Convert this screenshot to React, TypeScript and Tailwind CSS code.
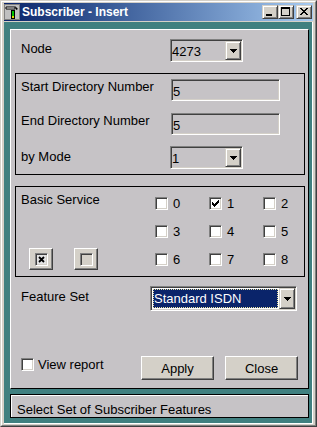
import React from "react";

// classic bevels
const sunken =
  "border border-t-[#808080] border-l-[#808080] border-b-white border-r-white shadow-[inset_1px_1px_0_#404040,inset_-1px_-1px_0_#d4d0c8]";
const raised =
  "border border-t-white border-l-white border-b-[#404040] border-r-[#404040] shadow-[inset_-1px_-1px_0_#808080] bg-[#d4d0c8]";
const capBtn =
  "w-[16px] h-[14px] box-border bg-[#d4d0c8] border border-t-[#d4d0c8] border-l-[#d4d0c8] border-b-[#404040] border-r-[#404040] shadow-[inset_1px_1px_0_#fff,inset_-1px_-1px_0_#808080]";

const ArrowBtn = () => (
  <div className="w-[16px] h-full box-border flex items-center justify-center pt-[1px] bg-[#d4d0c8] border border-t-[#d4d0c8] border-l-[#d4d0c8] border-b-[#404040] border-r-[#404040] shadow-[inset_1px_1px_0_#fff,inset_-1px_-1px_0_#808080]">
    <svg width="7" height="4" viewBox="0 0 7 4">
      <path d="M0 0h7v1H0zM1 1h5v1H1zM2 2h3v1H2zM3 3h1v1H3z" fill="#000" />
    </svg>
  </div>
);

const Combo = ({ value }: { value: string }) => (
  <div className={`w-[73px] h-[23px] box-border p-[1px] flex ${sunken}`}>
    <div className="flex-1 pt-[3px] leading-[15px]">{value}</div>
    <ArrowBtn />
  </div>
);

const Field = ({ value }: { value: string }) => (
  <div className={`w-[109px] h-[22px] box-border px-[1px] pt-[4px] leading-[15px] ${sunken}`}>{value}</div>
);

const Check = ({ on }: { on?: boolean }) => (
  <div className={`w-[13px] h-[13px] box-border bg-white flex items-center justify-center ${sunken}`}>
    {on && (
      <svg width="7" height="7" viewBox="0 0 7 7">
        <path
          d="M6 0h1v1H6zM5 1h2v1H5zM0 2h1v1H0zM4 2h3v1H4zM0 3h2v1H0zM3 3h3v1H3zM0 4h5v1H0zM1 5h3v1H1zM2 6h1v1H2z"
          fill="#000"
        />
      </svg>
    )}
  </div>
);

const TitleIcon = () => (
  <svg width="16" height="16" viewBox="0 0 16 16">
    <rect x="0" y="0" width="16" height="16" fill="#c0c0c0" />
    <rect x="0.5" y="0.5" width="15" height="15" fill="none" stroke="#808080" />
    <path d="M2 3h9v2H2z" fill="#fff" stroke="#000" strokeWidth="1" />
    <path d="M11 2l3 3-2 1z" fill="#000" />
    <rect x="7" y="6" width="4" height="9" fill="#000" />
    <rect x="8" y="7" width="2" height="5" fill="#00c000" />
    <rect x="8" y="12" width="2" height="2" fill="#e0e000" />
  </svg>
);

export default function App() {
  const services = ["0", "1", "2", "3", "4", "5", "6", "7", "8"];

  return (
    <div className="w-[317px] h-[427px] box-border border border-t-[#d4d0c8] border-l-[#d4d0c8] border-b-[#404040] border-r-[#404040] bg-[#d4d0c8] font-['Liberation_Sans',Arial,sans-serif] text-[13px] text-black">
      <div className="h-full box-border border border-t-white border-l-white border-b-[#808080] border-r-[#808080] pt-[1px] pl-[2px] pr-[2px] pb-[1px] flex flex-col">
        {/* Title bar */}
        <div className="h-[18px] mb-[1px] flex items-center pr-[1px] bg-linear-to-r from-[#0a246a] to-[#a6caf0]">
          <TitleIcon />
          <span className="ml-[2px] mt-[-1px] text-white font-bold text-[12px] leading-[14px]">Subscriber - Insert</span>
          <div className="ml-auto flex">
            <div className={capBtn}>
              <svg width="14" height="12" viewBox="0 0 14 12">
                <rect x="3" y="8" width="6" height="2" fill="#000" />
              </svg>
            </div>
            <div className={capBtn}>
              <svg width="14" height="12" viewBox="0 0 14 12">
                <path d="M2 1h9v2H2zM2 1h1v9H2zM10 1h1v9h-1zM2 9h9v1H2z" fill="#000" />
              </svg>
            </div>
            <div className={`${capBtn} ml-[2px]`}>
              <svg width="14" height="12" viewBox="0 0 14 12">
                <path
                  d="M3 2h2v1H3zM9 2h2v1H9zM4 3h2v1H4zM8 3h2v1H8zM5 4h4v1H5zM6 5h2v1H6zM5 6h4v1H5zM4 7h2v1H4zM8 7h2v1H8zM3 8h2v1H3zM9 8h2v1H9z"
                  fill="#000"
                />
              </svg>
            </div>
          </div>
        </div>

        {/* Client area */}
        <div className="flex-1 flex flex-col box-border bg-[#408080] border-r border-b border-white pt-[7px] pb-[5px] pl-[6px] pr-[3px]">
          <div className="flex-1 flex flex-col box-border border border-t-white border-l-white border-b-black border-r-black bg-[#c6c3c6] pb-[8px]">
            {/* Node */}
            <div className="mt-[9px] pl-[10px] flex items-start">
              <div className="w-[149px] pt-[2px] leading-[15px]">Node</div>
              <Combo value="4273" />
            </div>

            {/* Directory numbers */}
            <div className="mt-[11px] ml-[4px] mr-[3px] border border-black pt-[5px] pb-[5px] pl-[5px] flex flex-col">
              <div className="flex items-start">
                <div className="w-[150px] leading-[15px]">Start Directory Number</div>
                <Field value="5" />
              </div>
              <div className="mt-[12px] flex items-start">
                <div className="w-[150px] leading-[15px]">End Directory Number</div>
                <Field value="5" />
              </div>
              <div className="mt-[11px] flex items-start">
                <div className="w-[149px] pt-[3px] leading-[15px]">by Mode</div>
                <Combo value="1" />
              </div>
            </div>

            {/* Basic service */}
            <div className="mt-[11px] ml-[4px] mr-[3px] border border-black pt-[5px] pb-[10px] flex">
              <div className="w-[139px] box-border pl-[5px] flex flex-col">
                <div className="leading-[15px]">Basic Service</div>
                <div className="mt-auto mb-[-4px] pl-[8px] flex gap-[21px]">
                  <div className={`w-[24px] h-[22px] box-border flex items-center justify-center ${raised}`}>
                    <div className={`w-[13px] h-[13px] box-border flex items-center justify-center bg-[#e4e4e4] ${sunken}`}>
                      <svg width="7" height="7" viewBox="0 0 7 7">
                        <path d="M1 1L6 6M6 1L1 6" stroke="#000" strokeWidth="1.8" />
                      </svg>
                    </div>
                  </div>
                  <div className={`w-[24px] h-[22px] box-border flex items-center justify-center ${raised}`}>
                    <div className={`w-[13px] h-[13px] box-border bg-[#d4d0c8] ${sunken}`} />
                  </div>
                </div>
              </div>
              <div className="flex-1 pt-[5px] grid grid-cols-[54px_54px_1fr] auto-rows-[13px] gap-y-[15px]">
                {services.map((s) => (
                  <div key={s} className="flex items-center gap-[5px]">
                    <Check on={s === "1"} />
                    <span className="leading-[13px]">{s}</span>
                  </div>
                ))}
              </div>
            </div>

            {/* Feature set */}
            <div className="mt-[9px] pl-[10px] flex items-start">
              <div className="w-[129px] pt-[3px] leading-[15px]">Feature Set</div>
              <div className={`w-[147px] h-[25px] box-border p-[1px] flex ${sunken}`}>
                <div className="flex-1 bg-white p-[1px] flex">
                  <div className="flex-1 bg-[#0a246a] border border-dotted border-[#e8e0a0] text-white pt-[1px] leading-[15px]">
                    Standard ISDN
                  </div>
                </div>
                <ArrowBtn />
              </div>
            </div>

            {/* Bottom actions */}
            <div className="mt-auto pl-[10px] pr-[10px] flex items-start">
              <div className="mt-[2px] flex items-center gap-[4px]">
                <Check />
                <span className="leading-[13px]">View report</span>
              </div>
              <div className="ml-auto flex gap-[11px]">
                <button className={`w-[73px] h-[24px] box-border leading-[15px] ${raised}`}>Apply</button>
                <button className={`w-[73px] h-[24px] box-border leading-[15px] ${raised}`}>Close</button>
              </div>
            </div>
          </div>

          {/* Status bar */}
          <div className="mt-[5px] h-[24px] box-border border border-black shadow-[inset_1px_1px_0_#fff] bg-[#c6c3c6] pl-[6px] pt-[8px] leading-[13px]">
            Select Set of Subscriber Features
          </div>
        </div>
      </div>
    </div>
  );
}
